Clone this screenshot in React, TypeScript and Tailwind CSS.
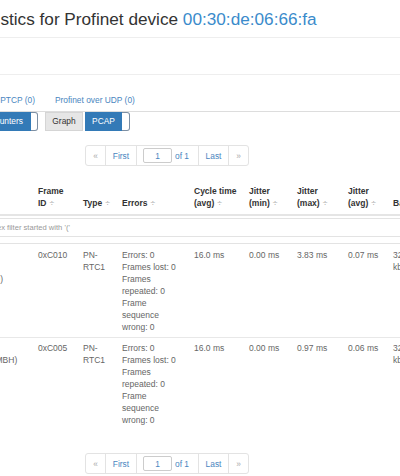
import React from "react";

const cols = "grid grid-cols-[85px_45px_39px_72px_55px_48px_51px_45px_80px] w-max -ml-[52px]";

function Sort() {
  return <span className="ml-[3px] text-[#a8a8a8] font-normal">÷</span>;
}

function Pager() {
  return (
    <div className="ml-[85px] flex h-[21px] w-fit border border-[#e3e3e3] rounded-[3px] text-[8.4px] leading-[12px]">
      <span className="w-[20px] flex items-center justify-center text-[#aaa] border-r border-[#e3e3e3]">«</span>
      <span className="w-[31px] flex items-center justify-center text-[#4a86c0] border-r border-[#e3e3e3]">First</span>
      <span className="w-[62px] flex items-center pl-[6px] gap-[3px] border-r border-[#e3e3e3]">
        <span className="w-[29px] h-[15px] border border-[#ccc] rounded-[2px] flex items-center justify-center text-[#4a86c0]">1</span>
        <span className="text-[#4a86c0]">of 1</span>
      </span>
      <span className="w-[30px] flex items-center justify-center text-[#4a86c0] border-r border-[#e3e3e3]">Last</span>
      <span className="w-[19px] flex items-center justify-center text-[#aaa]">»</span>
    </div>
  );
}

const errs = ["Errors: 0", "Frames lost: 0", "Frames", "repeated: 0", "Frame", "sequence", "wrong: 0"];

function Lines({ l }: { l: string[] }) {
  return (
    <div className="pl-[5px]">
      {l.map((t, i) => (
        <div key={i} className="whitespace-nowrap">{t}</div>
      ))}
    </div>
  );
}

function Row({ name, id, jmax, javg, pad }: { name: string[]; id: string; jmax: string; javg: string; pad: string }) {
  return (
    <div className={`${cols} ${pad} text-[8.5px] leading-[12px] text-[#666]`}>
      <Lines l={name} />
      <Lines l={[id]} />
      <Lines l={["PN-", "RTC1"]} />
      <Lines l={errs} />
      <Lines l={["16.0 ms"]} />
      <Lines l={["0.00 ms"]} />
      <Lines l={[jmax]} />
      <Lines l={[javg]} />
      <Lines l={["32 B/s", "kbit/s"]} />
    </div>
  );
}

export default function App() {
  return (
    <div className="w-[400px] h-[476px] overflow-hidden bg-white font-['Liberation_Sans',Arial,sans-serif]">
      <div className="border-b border-[#eee] pt-[9px] pb-[8px]">
        <h1 className="-ml-[34px] whitespace-nowrap text-[17.2px] leading-[20px] text-[#333]">
          Statistics for Profinet device <span className="text-[#3a8bcb]">00:30:de:06:66:fa</span>
        </h1>
      </div>
      <div className="h-[37px] border-b border-[#eee]" />
      <div className="h-[37px] border-b border-[#ddd] flex items-end">
        <div className="flex -ml-[41px] text-[#4a86c0] text-[8.4px] leading-[12px] whitespace-nowrap">
          <span className="px-[10px] pb-[5px]">Profinet PTCP (0)</span>
          <span className="px-[10px] pb-[5px]">Profinet over UDP (0)</span>
        </div>
      </div>
      <div className="flex h-[19px] -ml-[19px] text-[8.4px] whitespace-nowrap">
        <div className="flex">
          <div className="bg-[#337ab7] text-white px-[8px] flex items-center rounded-l-[3px]">Counters</div>
          <div className="w-[7px] bg-white border border-l-0 border-[#7d8fa3] rounded-r-[3px]" />
        </div>
        <div className="ml-[7px] w-[38px] bg-[#e6e6e6] border border-[#d5d5d5] text-[#333] flex items-center justify-center">Graph</div>
        <div className="ml-[2px] flex">
          <div className="w-[37px] bg-[#337ab7] text-white flex items-center justify-center">PCAP</div>
          <div className="w-[8px] bg-white border border-l-0 border-[#7d8fa3] rounded-r-[3px]" />
        </div>
      </div>
      <div className="mt-[14px]">
        <Pager />
      </div>
      <div className="border-b-2 border-[#e5e5e5]">
        <div className={`${cols} items-end pt-[19px] pb-[5px] text-[8.5px] leading-[12px] font-bold text-[#333]`}>
          <div className="pl-[5px]">Device</div>
          <div className="pl-[5px]"><div>Frame</div><div>ID<Sort /></div></div>
          <div className="pl-[5px]">Type<Sort /></div>
          <div className="pl-[5px]">Errors<Sort /></div>
          <div className="pl-[5px]"><div>Cycle time</div><div>(avg)<Sort /></div></div>
          <div className="pl-[5px]"><div>Jitter</div><div>(min)<Sort /></div></div>
          <div className="pl-[5px]"><div>Jitter</div><div>(max)<Sort /></div></div>
          <div className="pl-[5px]"><div>Jitter</div><div>(avg)<Sort /></div></div>
          <div className="pl-[5px] whitespace-nowrap">Bandwidth<Sort /></div>
        </div>
      </div>
      <div className="border-b border-[#e3e3e3] pt-[2px] pb-[6px]">
        <input
          readOnly
          placeholder="Regex filter started with '('"
          className="block h-[19px] w-[460px] -ml-[25px] pl-[7px] border border-[#e3e3e3] rounded-[2px] text-[7.6px] outline-none placeholder:text-[#999]"
        />
      </div>
      <div className="border-b border-[#e8e8e8]">
        <Row name={["ET200SP", "IM155-6", "(Siemens IO)"]} id="0xC010" jmax="3.83 ms" javg="0.07 ms" pad="pt-[5px] pb-[4px]" />
      </div>
      <Row name={["netX 90", "(Hilscher GMBH)"]} id="0xC005" jmax="0.97 ms" javg="0.06 ms" pad="pt-[4px] pb-[5px]" />
      <div className="mt-[22px]">
        <Pager />
      </div>
    </div>
  );
}
